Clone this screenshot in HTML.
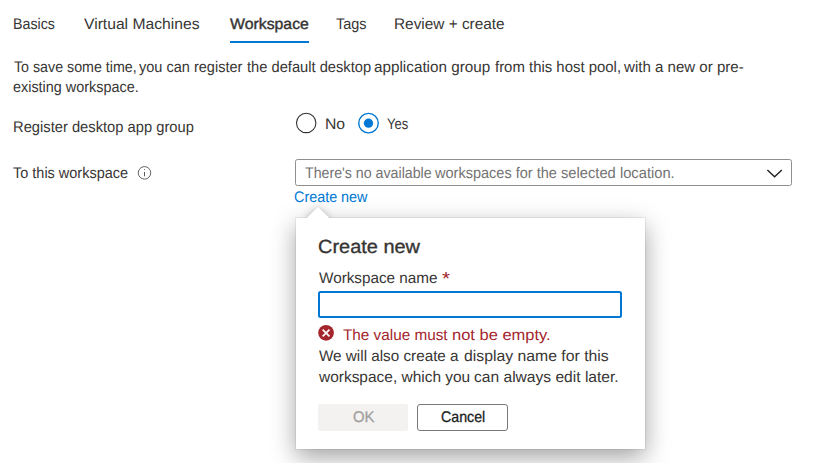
<!DOCTYPE html>
<html><head><meta charset="utf-8"><title>Workspace</title>
<style>
html,body{margin:0;padding:0;background:#fff;}
body{width:824px;height:463px;position:relative;overflow:hidden;font-family:"Liberation Sans",sans-serif;color:#383634;font-size:15.4px;text-rendering:geometricPrecision;}
.t{position:absolute;white-space:nowrap;line-height:20px;height:20px;}
#ul{position:absolute;left:230px;top:41px;width:79px;height:2px;background:#0078d4;}
#dd{position:absolute;left:295px;top:159px;width:497px;height:26.5px;box-sizing:border-box;border:1px solid #918f8d;border-radius:2.5px;background:#fff;}
#pop{position:absolute;left:296px;top:218px;width:349px;height:231px;background:#fff;box-shadow:0 0 0 1px rgba(0,0,0,.06),0 8px 23px rgba(0,0,0,.37);}
#arrow{position:absolute;left:310px;top:210px;width:16px;height:16px;background:#fff;transform:rotate(45deg);box-shadow:0 0 0 1px rgba(0,0,0,.03),0 0 8px rgba(0,0,0,.22);}
#arrowc{position:absolute;left:296px;top:218px;width:80px;height:30px;background:#fff;}
#inp{position:absolute;left:318px;top:291px;width:304px;height:27px;box-sizing:border-box;border:2px solid #0078d4;border-radius:2.5px;background:#fff;}
.btn{position:absolute;top:404px;width:90px;height:26.6px;box-sizing:border-box;border-radius:2px;}
#ok{left:318px;background:#f3f2f1;}
#cancel{left:417.2px;width:90.8px;background:#fff;border:1px solid #7a7876;border-radius:3px;}
</style></head><body>
<div id="ul"></div>
<svg style="position:absolute;left:136px;top:164px;" width="18" height="18" viewBox="0 0 18 18"><circle cx="8.5" cy="8.85" r="6.25" fill="none" stroke="#4a4846" stroke-width="0.85"/><rect x="8.05" y="8" width="0.9" height="4.3" fill="#4a4846"/><rect x="8.05" y="5.2" width="0.9" height="0.9" fill="#4a4846"/></svg>
<svg style="position:absolute;left:290px;top:108px;" width="100" height="30" viewBox="0 0 100 30"><circle cx="16.2" cy="14.95" r="9.7" fill="#fff" stroke="#323130" stroke-width="1.1"/><circle cx="78.5" cy="15.15" r="9.75" fill="#fff" stroke="#0078d4" stroke-width="1.4"/><circle cx="78.5" cy="15.2" r="4.65" fill="#0078d4"/></svg>
<div id="dd"></div>
<svg style="position:absolute;left:766px;top:168px;" width="17" height="11" viewBox="0 0 17 11"><path d="M1.4 1.9 L8.6 8.7 L15.8 1.9" fill="none" stroke="#201f1e" stroke-width="1.35"/></svg>
<div id="pop"></div>
<div id="arrow"></div>
<div id="arrowc"></div>
<div id="inp"></div>
<svg style="position:absolute;left:318px;top:324px;" width="17" height="18" viewBox="0 0 17 18"><circle cx="8.05" cy="8.8" r="7.85" fill="#a4262c"/><path d="M4.65 5.55 L11.45 12.35 M11.45 5.55 L4.65 12.35" stroke="#fff" stroke-width="1.75" stroke-linecap="butt"/></svg>
<div class="btn" id="ok"></div>
<div class="btn" id="cancel"></div>
<span class="t" id="t1" style="left:13px;top:15px;font-size:15.4px;transform:scaleX(0.9256);transform-origin:0 0;">Basics</span>
<span class="t" id="t2" style="left:84px;top:15px;font-size:15.4px;transform:scaleX(1.0173);transform-origin:0 0;">Virtual Machines</span>
<span class="t" id="t3" style="left:230px;top:15px;font-size:15.4px;-webkit-text-stroke:0.4px #323130;transform:scaleX(1.0287);transform-origin:0 0;">Workspace</span>
<span class="t" id="t4" style="left:336px;top:15px;font-size:15.4px;transform:scaleX(0.9400);transform-origin:0 0;">Tags</span>
<span class="t" id="t5" style="left:394px;top:15px;font-size:15.4px;transform:scaleX(0.9983);transform-origin:0 0;">Review + create</span>
<span class="t" id="t6a" style="left:14px;top:58px;font-size:15.4px;transform:scaleX(0.9252);transform-origin:0 0;">To save some time, </span>
<span class="t" id="t6b" style="left:139px;top:58px;font-size:15.4px;transform:scaleX(0.9440);transform-origin:0 0;">you can register </span>
<span class="t" id="t6c" style="left:247px;top:58px;font-size:15.4px;transform:scaleX(0.9540);transform-origin:0 0;">the default desktop </span>
<span class="t" id="t6d" style="left:374px;top:58px;font-size:15.4px;transform:scaleX(0.9920);transform-origin:0 0;">application group </span>
<span class="t" id="t6e" style="left:495px;top:58px;font-size:15.4px;transform:scaleX(0.9695);transform-origin:0 0;">from this host pool, </span>
<span class="t" id="t6f" style="left:624px;top:58px;font-size:15.4px;transform:scaleX(0.9785);transform-origin:0 0;">with a new or pre-</span>
<span class="t" id="t7" style="left:13px;top:78px;font-size:15.4px;transform:scaleX(0.9355);transform-origin:0 0;">existing workspace.</span>
<span class="t" id="t8" style="left:13px;top:118px;font-size:15.4px;transform:scaleX(0.9565);transform-origin:0 0;">Register desktop app group</span>
<span class="t" id="t9" style="left:325px;top:115px;font-size:15.4px;transform:scaleX(1.0234);transform-origin:0 0;">No</span>
<span class="t" id="t10" style="left:387px;top:115px;font-size:15.4px;transform:scaleX(0.8441);transform-origin:0 0;">Yes</span>
<span class="t" id="t11" style="left:13px;top:164px;font-size:15.4px;transform:scaleX(0.9407);transform-origin:0 0;">To this workspace</span>
<span class="t" id="t12a" style="left:305px;top:164px;font-size:15.4px;color:#737373;transform:scaleX(0.9227);transform-origin:0 0;">There's no available </span>
<span class="t" id="t12b" style="left:435px;top:164px;font-size:15.4px;color:#737373;transform:scaleX(0.9438);transform-origin:0 0;">workspaces for the </span>
<span class="t" id="t12c" style="left:561px;top:164px;font-size:15.4px;color:#737373;transform:scaleX(0.9560);transform-origin:0 0;">selected location.</span>
<span class="t" id="t13" style="left:294px;top:188px;font-size:15.4px;color:#0078d4;transform:scaleX(0.9335);transform-origin:0 0;">Create new</span>
<span class="t" id="t14" style="left:318px;top:238px;font-size:19px;-webkit-text-stroke:0.35px #323130;transform:scaleX(1.0497);transform-origin:0 0;">Create new</span>
<span class="t" id="t15" style="left:319px;top:269px;font-size:15.4px;transform:scaleX(0.9923);transform-origin:0 0;">Workspace name </span>
<span class="t" id="t15s" style="left:442px;top:270px;font-size:19px;color:#a4262c;transform:scaleX(1.0878);transform-origin:0 0;">*</span>
<span class="t" id="t16a" style="left:343px;top:326px;font-size:15.4px;color:#a4262c;transform:scaleX(0.9941);transform-origin:0 0;">The value must </span>
<span class="t" id="t16b" style="left:452px;top:326px;font-size:15.4px;color:#a4262c;transform:scaleX(1.0710);transform-origin:0 0;">not be empty.</span>
<span class="t" id="t17a" style="left:319px;top:347px;font-size:15.4px;transform:scaleX(0.9909);transform-origin:0 0;">We will also create a </span>
<span class="t" id="t17b" style="left:464px;top:347px;font-size:15.4px;transform:scaleX(1.0253);transform-origin:0 0;">display name for this</span>
<span class="t" id="t18a" style="left:319px;top:368px;font-size:15.4px;transform:scaleX(1.0043);transform-origin:0 0;">workspace, which you </span>
<span class="t" id="t18b" style="left:474px;top:368px;font-size:15.4px;transform:scaleX(1.0128);transform-origin:0 0;">can always edit later.</span>
<span class="t" id="t19" style="left:353px;top:408px;font-size:15.4px;color:#a19f9d;-webkit-text-stroke:0.3px #a19f9d;transform:scaleX(0.9695);transform-origin:0 0;">OK</span>
<span class="t" id="t20" style="left:441px;top:408px;font-size:15.4px;color:#201f1e;-webkit-text-stroke:0.3px #201f1e;transform:scaleX(0.9236);transform-origin:0 0;">Cancel</span>
</body></html>
